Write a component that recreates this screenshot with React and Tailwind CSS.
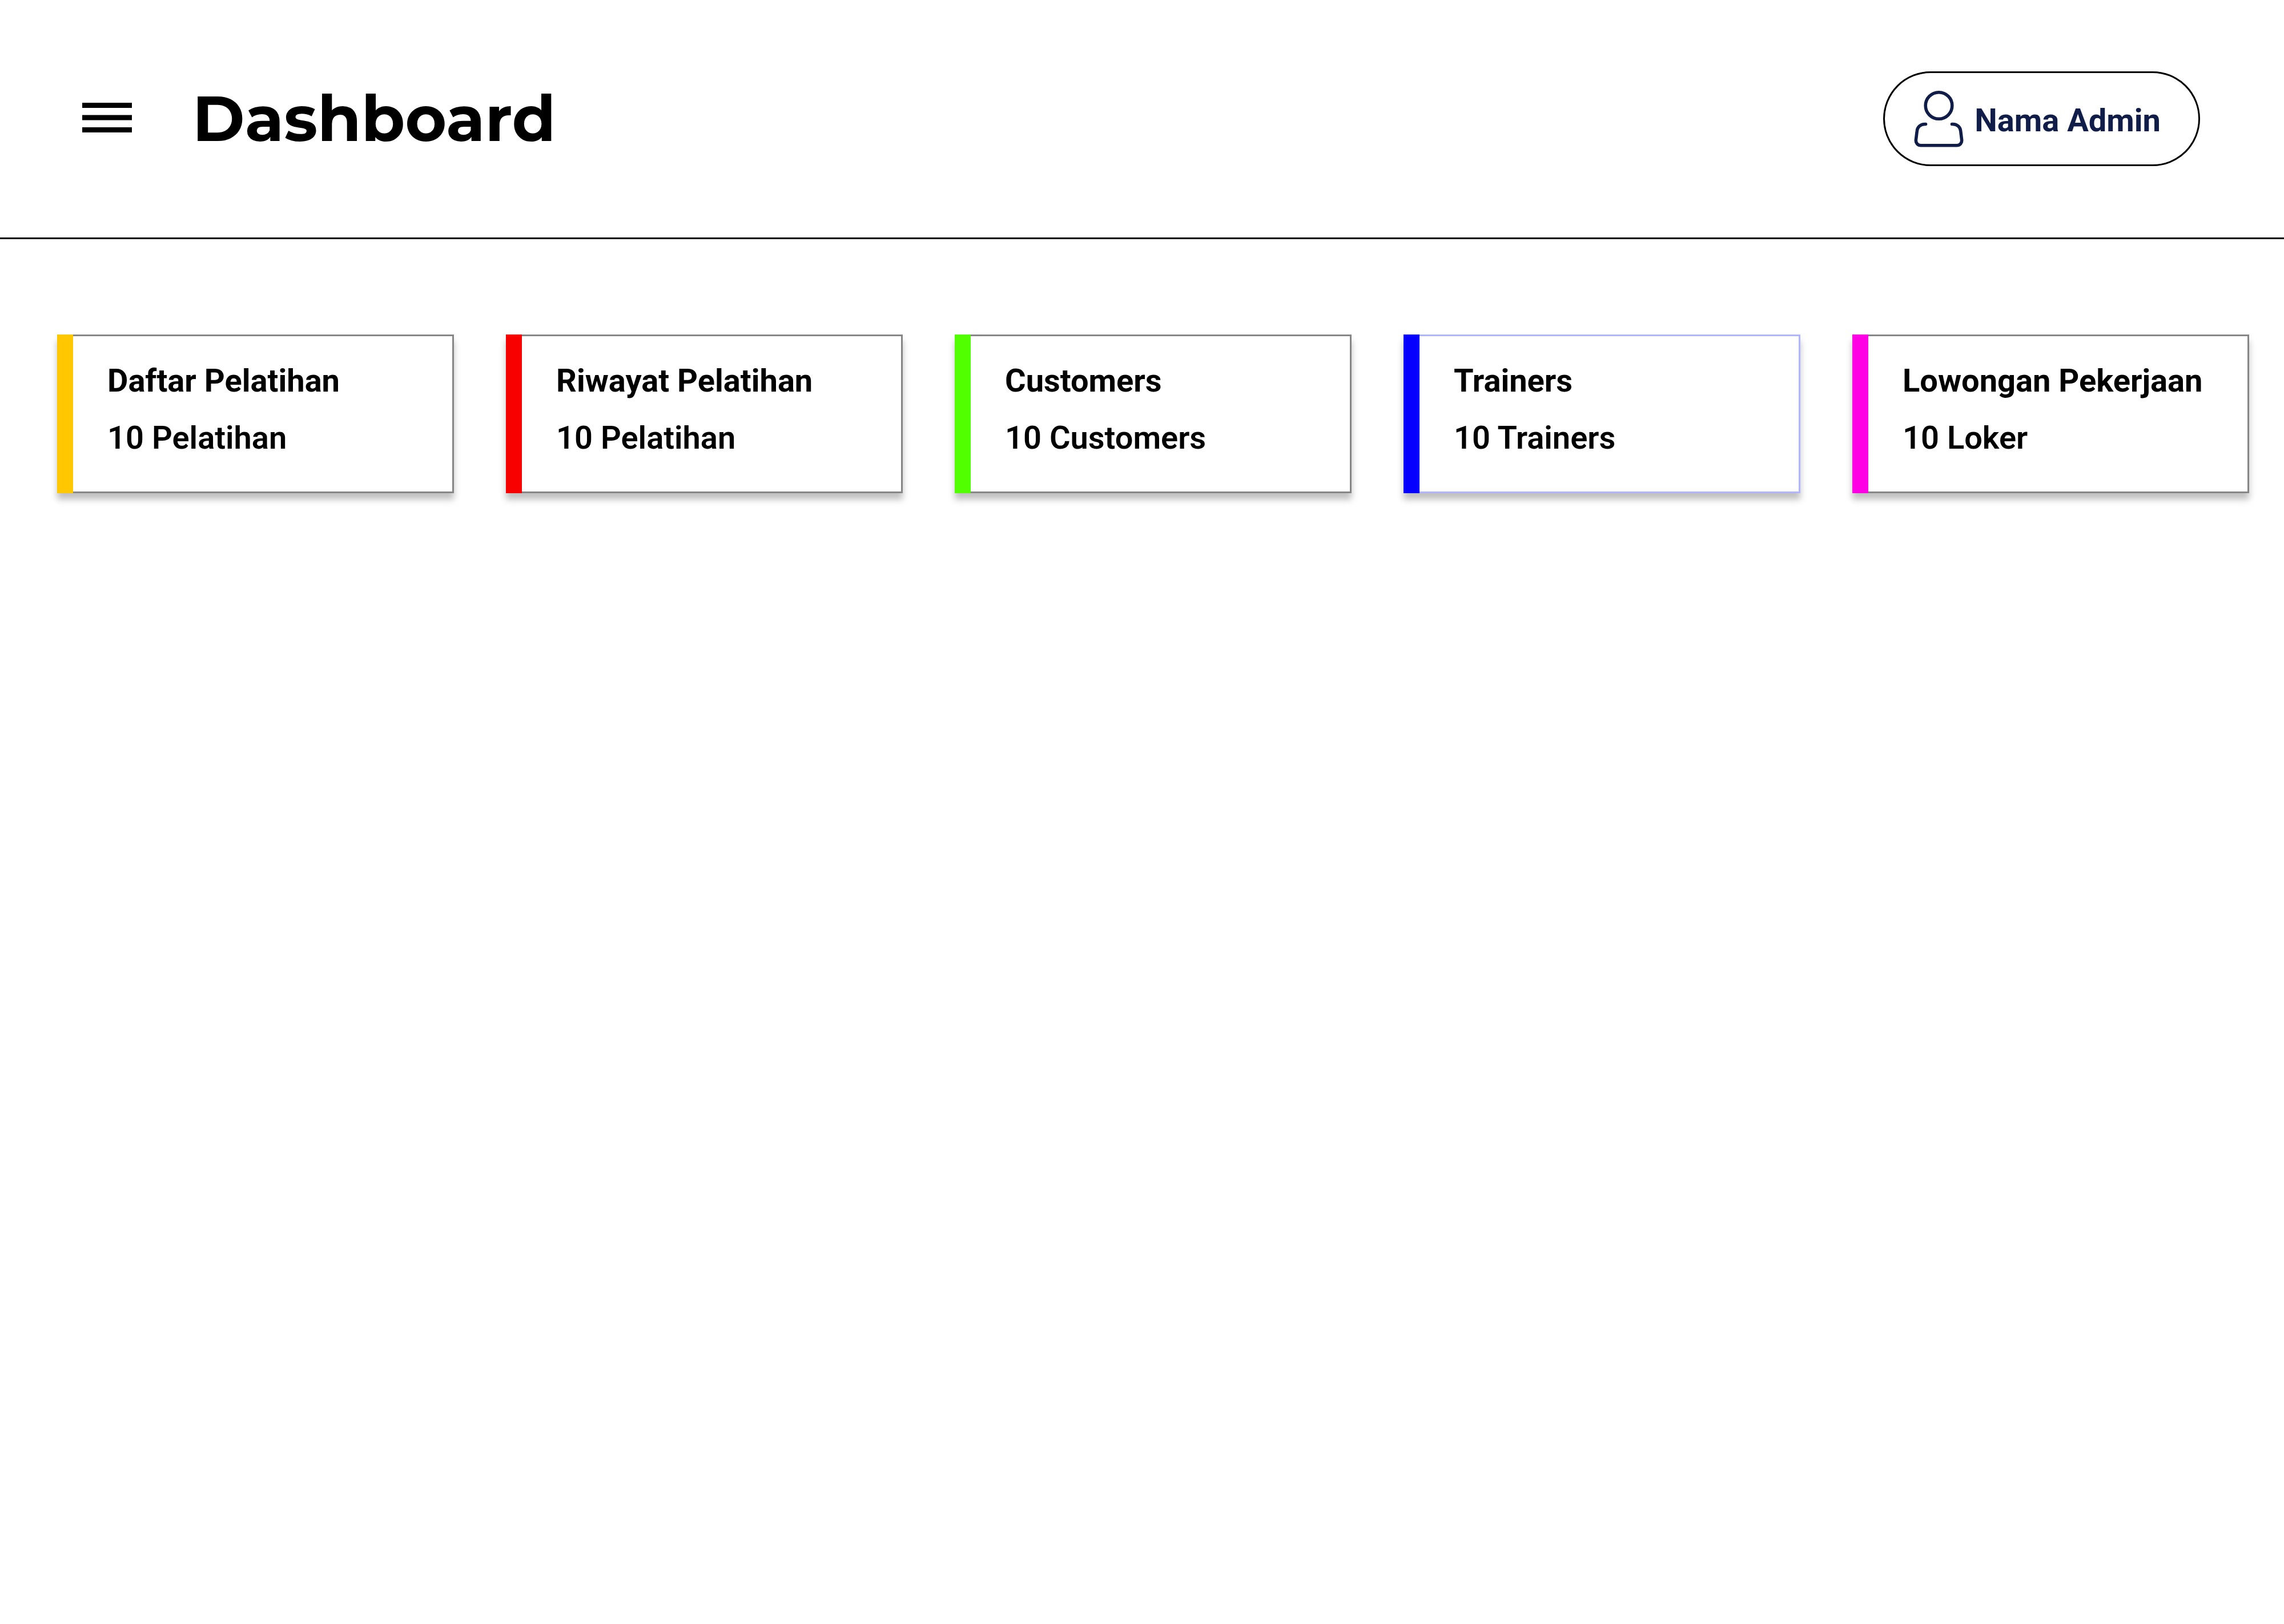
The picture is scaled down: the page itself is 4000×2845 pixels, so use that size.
const cards = [
  { title: "Daftar Pelatihan", value: "10 Pelatihan", bar: "bg-[#ffc700]", border: "border-[#868686]" },
  { title: "Riwayat Pelatihan", value: "10 Pelatihan", bar: "bg-[#f80000]", border: "border-[#868686]" },
  { title: "Customers", value: "10 Customers", bar: "bg-[#52ff00]", border: "border-[#868686]" },
  { title: "Trainers", value: "10 Trainers", bar: "bg-[#0500ff]", border: "border-[#b0b5ff]" },
  { title: "Lowongan Pekerjaan", value: "10 Loker", bar: "bg-[#ff00e5]", border: "border-[#868686]" },
];

function MenuIcon() {
  return (
    <svg className="h-[52px] w-[87px]" viewBox="0 0 87 52" fill="currentColor" aria-hidden="true">
      <rect width="87" height="9" />
      <rect y="21.5" width="87" height="9" />
      <rect y="43" width="87" height="9" />
    </svg>
  );
}

function UserIcon() {
  return (
    <svg
      className="h-[100px] w-[89px] shrink-0"
      viewBox="0 0 89 100"
      fill="none"
      stroke="currentColor"
      strokeWidth="5.6"
      strokeLinecap="round"
      strokeLinejoin="round"
      aria-hidden="true"
    >
      <circle cx="44.5" cy="27" r="23.3" />
      <path d="M21.5 59.5h-1.5C12 59.5 6.9 65 6.3 71.500L4.400 87C3.800 92.500 7.500 96.700 13 96.700h63c5.500 0 9.200-4.200 8.600-9.700L82.700 71.500C82 65 77 59.500 69 59.500h-1.500" />
    </svg>
  );
}

function StatCard({ title, value, bar, border }) {
  return (
    <article className="flex min-w-0 shadow-[0_11px_11px_rgba(0,0,0,0.25)]">
      <div className={`w-7 shrink-0 ${bar}`} />
      <div className={`min-w-0 grow border-[3px] border-l-0 bg-white pt-7 pb-11 pl-[60px] text-[56px] leading-[100px] whitespace-nowrap ${border}`}>
        <h2 className="font-bold">{title}</h2>
        <p className="font-semibold">{value}</p>
      </div>
    </article>
  );
}

export default function App() {
  return (
    <div className="min-h-screen bg-white font-[Roboto,sans-serif] text-black">
      <header className="flex items-center justify-between border-b-[3px] border-black py-[125px] pr-[147px] pl-36">
        <div className="flex items-center gap-[106px]">
          <button type="button" aria-label="Menu" className="pb-1">
            <MenuIcon />
          </button>
          <h1 className="font-['Montserrat','DejaVu_Sans',sans-serif] text-[111px] leading-[136px] font-bold">Dashboard</h1>
        </div>
        <button
          type="button"
          className="flex h-[166px] items-center gap-[18px] rounded-full border-[3px] border-black pr-[66px] pl-[50px] text-[56px] leading-[66px] font-bold whitespace-nowrap text-[#101d48]"
        >
          <UserIcon />
          <span className="pt-1.5">Nama Admin</span>
        </button>
      </header>
      <main className="grid grid-cols-5 gap-[91px] pt-[167px] pr-[61px] pl-[100px]">
        {cards.map((card) => (
          <StatCard key={card.title} {...card} />
        ))}
      </main>
    </div>
  );
}
